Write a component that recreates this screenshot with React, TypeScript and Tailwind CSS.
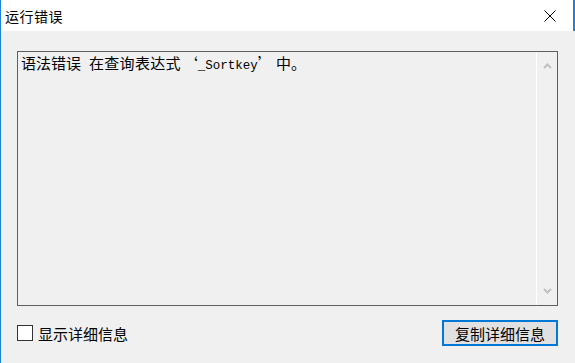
const cjk = { fontFamily: '"Noto Sans CJK SC", "Noto Sans", sans-serif' };

function Chevron({ up }: { up?: boolean }) {
  return (
    <svg width="9" height="6" viewBox="0 0 9 6" className="block">
      <path
        d={up ? "M1 5 L4.5 1.5 L8 5" : "M1 1 L4.5 4.5 L8 1"}
        fill="none"
        stroke="#c2c2c2"
        strokeWidth="2"
      />
    </svg>
  );
}

export default function App() {
  return (
    <div className="w-[575px] h-[363px] flex flex-col bg-[#f0f0f0] border-l border-[#1883d7] overflow-hidden" style={cjk}>
      {/* title bar */}
      <div className="h-[31px] shrink-0 bg-white flex items-center justify-between pl-[4px] border-r-2 border-r-[#1883d7]">
        <span className="text-[14px] leading-none text-black tracking-[0.5px]">运行错误</span>
        <div className="w-[46px] h-[31px] flex items-center justify-center">
          <svg width="12" height="12" viewBox="0 0 12 12">
            <path d="M0.5 0.5 L11.5 11.5 M11.5 0.5 L0.5 11.5" stroke="#000" strokeWidth="1" />
          </svg>
        </div>
      </div>

      {/* body */}
      <div className="flex-1 flex flex-col pl-[16px] pr-[17px] pt-[20px]">
        <div className="h-[255px] flex border border-[#5f5f5f] bg-[#f0f0f0]">
          <div className="flex-1 pl-[3px] pt-[2px] text-[15px] leading-[17px] text-black whitespace-nowrap flex items-baseline">
            <span>语法错误</span>
            <span className="ml-[8px] tracking-[0.3px]">在查询表达式</span>
            <span className="ml-[2px]">‘</span>
            <span style={{ fontFamily: '"Liberation Mono", monospace' }} className="text-[12.5px]">_Sortkey</span>
            <span>’</span>
            <span className="ml-[3px]">中。</span>
          </div>
          <div className="w-[21px] flex flex-col justify-between items-center border-l border-[#ffffff] py-[11px]">
            <Chevron up />
            <Chevron />
          </div>
        </div>

        <div className="mt-[14px] h-[26px] flex items-center justify-between">
          <label className="flex items-center gap-[5px] text-[15px] text-black">
            <span className="w-[16px] h-[16px] border border-[#333333] bg-white block" />
            <span className="leading-none">显示详细信息</span>
          </label>
          <button className="w-[116px] h-[26px] border-2 border-[#0078d7] bg-[#e1e1e1] text-[15px] text-black leading-none flex items-center justify-center">
            复制详细信息
          </button>
        </div>
      </div>
    </div>
  );
}
